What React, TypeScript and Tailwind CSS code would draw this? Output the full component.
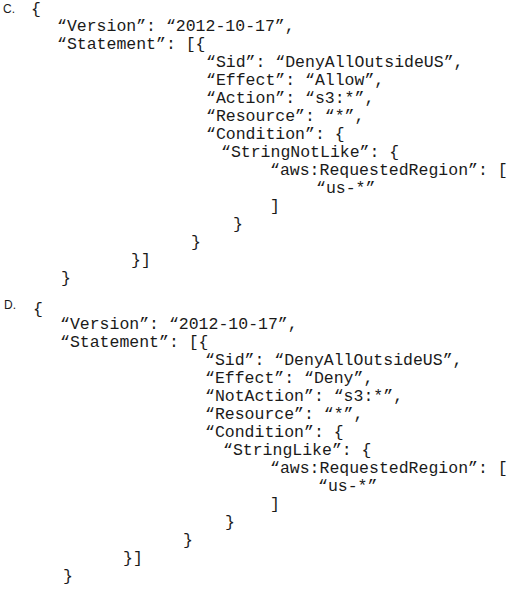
import React from "react";

type Line = { pad: string; text: string };

const blockC: Line[] = [
  { pad: "pl-[57px]", text: "“Version”: “2012-10-17”," },
  { pad: "pl-[57px]", text: "“Statement”: [{" },
  { pad: "pl-[206px]", text: "“Sid”: “DenyAllOutsideUS”," },
  { pad: "pl-[206px]", text: "“Effect”: “Allow”," },
  { pad: "pl-[206px]", text: "“Action”: “s3:*”," },
  { pad: "pl-[206px]", text: "“Resource”: “*”," },
  { pad: "pl-[206px]", text: "“Condition”: {" },
  { pad: "pl-[221px]", text: "“StringNotLike”: {" },
  { pad: "pl-[270px]", text: "“aws:RequestedRegion”: [" },
  { pad: "pl-[316px]", text: "“us-*”" },
  { pad: "pl-[270px]", text: "]" },
  { pad: "pl-[233px]", text: "}" },
  { pad: "pl-[191px]", text: "}" },
  { pad: "pl-[131px]", text: "}]" },
  { pad: "pl-[61px]", text: "}" },
];

const blockD: Line[] = [
  { pad: "pl-[60px]", text: "“Version”: “2012-10-17”," },
  { pad: "pl-[60px]", text: "“Statement”: [{" },
  { pad: "pl-[205px]", text: "“Sid”: “DenyAllOutsideUS”," },
  { pad: "pl-[205px]", text: "“Effect”: “Deny”," },
  { pad: "pl-[205px]", text: "“NotAction”: “s3:*”," },
  { pad: "pl-[205px]", text: "“Resource”: “*”," },
  { pad: "pl-[205px]", text: "“Condition”: {" },
  { pad: "pl-[223px]", text: "“StringLike”: {" },
  { pad: "pl-[270px]", text: "“aws:RequestedRegion”: [" },
  { pad: "pl-[318px]", text: "“us-*”" },
  { pad: "pl-[270px]", text: "]" },
  { pad: "pl-[225px]", text: "}" },
  { pad: "pl-[183px]", text: "}" },
  { pad: "pl-[123px]", text: "}]" },
  { pad: "pl-[63px]", text: "}" },
];

function Rows({ lines }: { lines: Line[] }) {
  return (
    <>
      {lines.map((l, i) => (
        <div
          key={i}
          className={`${l.pad} h-[18px] leading-[18px] whitespace-pre`}
        >
          {l.text}
        </div>
      ))}
    </>
  );
}

export default function App() {
  return (
    <div className="w-[520px] h-[596px] bg-white text-[#1a1a1a] overflow-hidden pt-[2px] font-['Liberation_Mono','Courier_New',monospace]">
      <div className="text-[16.5px]">
        {/* C */}
        <div className="flex h-[16px] items-center">
          <span className="w-[31px] pl-[3px] text-[12px] leading-none font-['Liberation_Sans',Arial,sans-serif] -mt-[2px]">
            C.
          </span>
          <span className="leading-[16px]">{"{"}</span>
        </div>
        <Rows lines={blockC} />

        {/* D */}
        <div className="flex h-[13px] items-center mt-[15px]">
          <span className="w-[33px] pl-[4px] text-[12px] leading-none font-['Liberation_Sans',Arial,sans-serif] -mt-[9px]">
            D.
          </span>
          <span className="leading-[13px]">{"{"}</span>
        </div>
        <Rows lines={blockD} />
      </div>
    </div>
  );
}
